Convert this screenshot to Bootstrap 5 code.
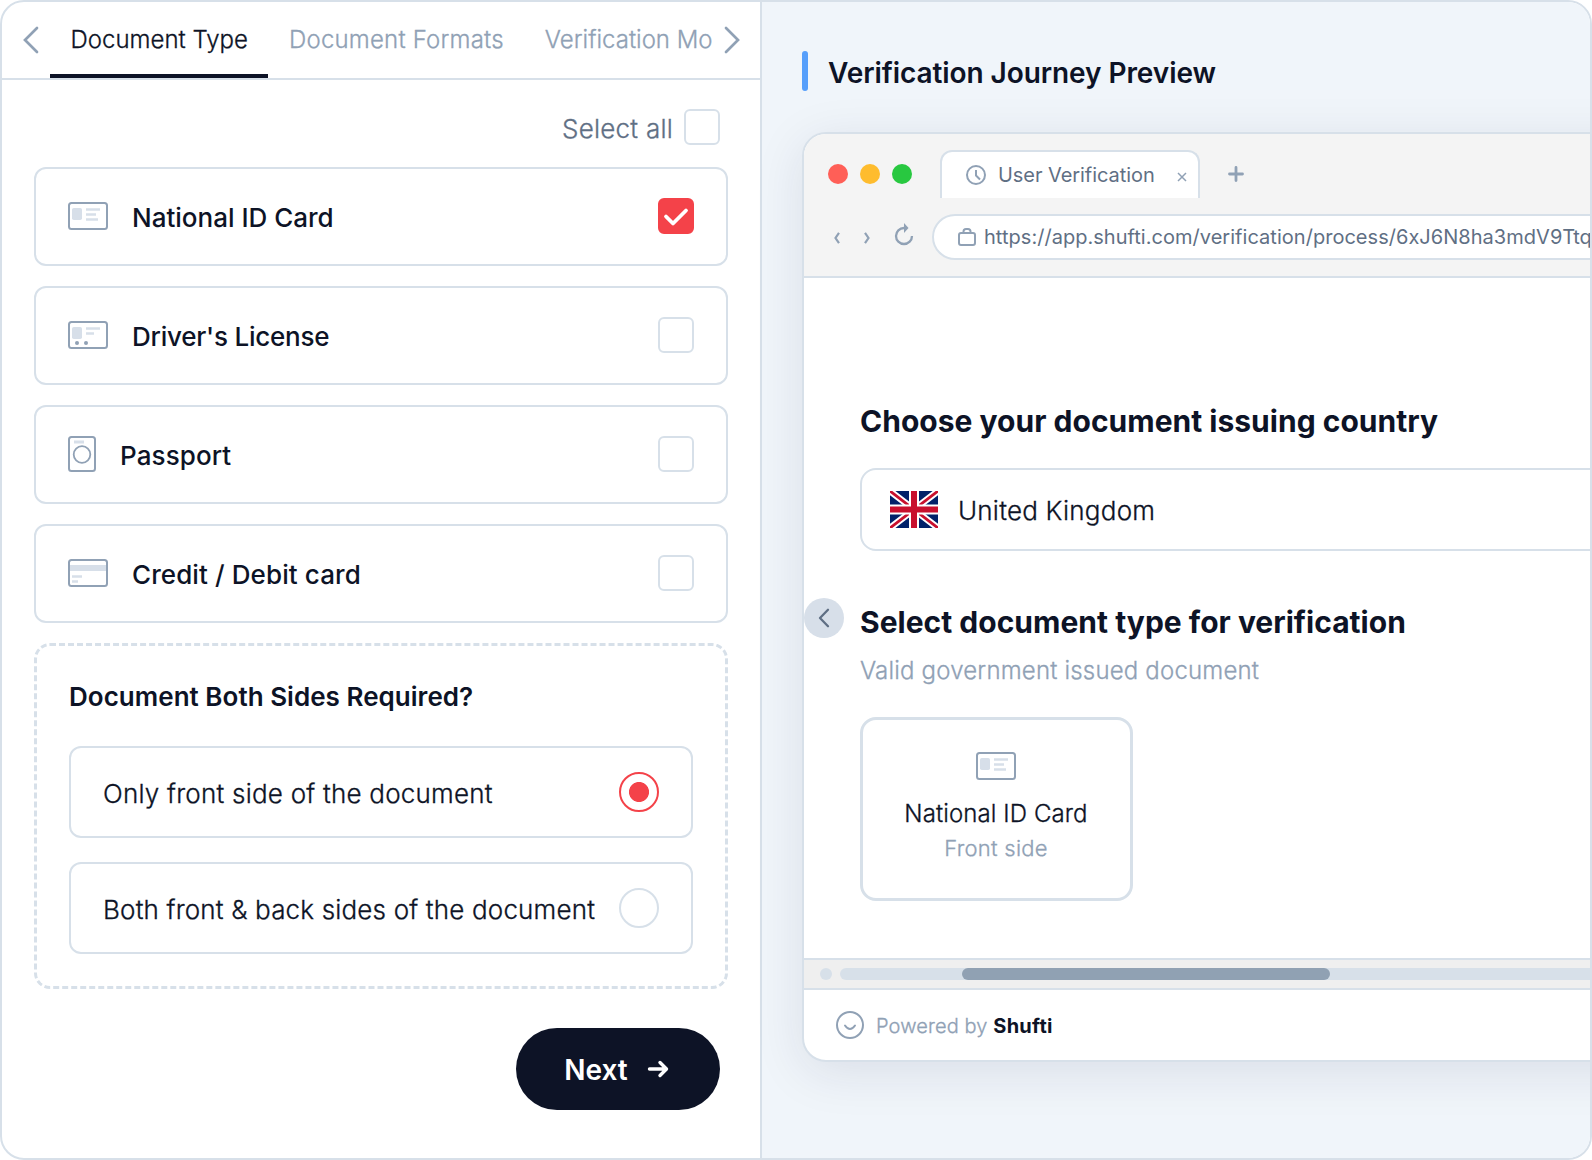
<!DOCTYPE html>
<html lang="en">
<head>
<meta charset="utf-8">
<meta name="viewport" content="width=device-width, initial-scale=1">
<title>Verification Journey</title>
<link href="https://cdn.jsdelivr.net/npm/bootstrap@5.3.0/dist/css/bootstrap.min.css" rel="stylesheet">
<style>
:root{--line:#d7e0e9;--ink:#0d1326;--slate:#5f6f84;--mute:#90a1b5;--red:#f44249}
body{font-family:Inter,"Liberation Sans",sans-serif;color:var(--ink);background:#fff;overflow:hidden}
svg{display:block;flex:none;overflow:visible}
.frame{width:1592px;height:1160px;border:2px solid var(--line);border-radius:24px}
.frame .left-pane{width:760px;border-right:2px solid var(--line)}
.right-pane{background:#f0f5fa;padding:49px 0 0 40px;min-width:0}
.light-text{font-weight:300;-webkit-text-stroke:.3px currentColor}
.tabs{height:78px;border-bottom:2px solid var(--line);padding:0 21px}
.tab-link{height:76px;font-size:24px;line-height:76px;color:var(--mute);white-space:nowrap}
.tab-link.current{width:218px;margin-left:11px;padding-left:20.5px;color:var(--ink);border-bottom:4px solid var(--ink)}
.tab-formats{margin-left:21px;letter-spacing:.2px}
.tab-modes{margin-left:41px}
.body-pane{padding:29px 32px 0}
.box{width:36px;height:36px;border:2px solid var(--line);border-radius:6px;flex:none}
.box.on{background:var(--red);border-color:var(--red)}
.doc .box,.doc svg.kind{margin-top:-1px}
.selall{font-size:26px;color:var(--slate);line-height:36px;gap:11px;margin:0 8px 22px 0;letter-spacing:.23px}
.selall .lbl{padding-top:2px;margin-bottom:-2px}
.doc{height:99px;border:2px solid var(--line);border-radius:12px;padding:0 32px;font-size:26px;font-weight:500}
.doc .lbl{padding-top:2px;margin-left:24px}
.ls-driver{letter-spacing:-.23px}
.ls-wide{letter-spacing:.1px}
.sides{height:346px;border:3px dashed var(--line);border-radius:16px;padding:31px 32px 0}
.sides h2{font-size:26px;font-weight:600;line-height:40px;margin:0 0 29px;letter-spacing:.03px}
.opt{height:92px;border:2px solid var(--line);border-radius:12px;padding:0 32px;font-size:26px;white-space:nowrap;letter-spacing:.22px}
.opt.both{letter-spacing:.17px}
.opt .lbl{padding-top:2px}
.radio{width:40px;height:40px;border:2px solid var(--line);border-radius:50%;flex:none}
.radio.on{border-color:var(--red);background:radial-gradient(circle,var(--red) 9.6px,transparent 10.4px)}
.next{width:204px;height:82px;background:var(--ink);color:#fff;font-size:28px;font-weight:600;margin:39px 8px 0 0;gap:20px;padding-right:4px}
.next .lbl{padding-top:2px}
.pv-title{height:40px;font-size:28px;font-weight:600;gap:20px;margin-bottom:41px;letter-spacing:-.075px}
.pv-title i{width:6px;height:40px;border-radius:3px;background:#569ffb}
.browser{width:900px;height:930px;border:2px solid var(--line);border-radius:24px;background:#fff;box-shadow:0 10px 50px rgba(30,30,70,.1)}
.chrome{height:144px;background:#f4f4f4;border-bottom:2px solid var(--line);border-radius:22px 22px 0 0;padding:16px 0 0 24px}
.dot{width:20px;height:20px;border-radius:50%;margin-right:12px}
.dot-close{background:#ff5f57}.dot-min{background:#febc2e}.dot-max{background:#28c840}
.btab{width:260px;height:48px;background:#fff;border:2px solid var(--line);border-bottom:0;border-radius:12px 12px 0 0;font-size:20px;color:var(--slate);margin:0 28px 0 16px;padding:0 11px 0 24px;white-space:nowrap;letter-spacing:-.06px}
.btab .lbl{margin-left:12px}
.addr{margin-top:16px;padding-left:6px}
.addr .arrow{margin:2px 24px 0 0}
.addr .reload{margin:-6px 0 0 1px}
.pill{width:760px;height:46px;border:2px solid var(--line);border-radius:23px;background:#fff;font-size:20px;color:var(--slate);padding-left:24px;margin-left:19px;gap:8px;white-space:nowrap;letter-spacing:.03px}
.content{height:680px;padding:123px 0 0 56px}
.content h1{font-size:30px;font-weight:700;line-height:40px;margin:0;white-space:nowrap;letter-spacing:.015px}
.country{height:83px;width:860px;border:2px solid var(--line);border-radius:16px;padding-left:28px;font-size:26px;gap:20px;margin-top:27px;margin-bottom:51px;letter-spacing:.22px}
.country .lbl{padding-top:2px}
.sub{font-size:24px;line-height:32px;color:var(--mute);margin:13px 0 30px;letter-spacing:.18px}
.pick{width:273px;height:184px;border:3px solid var(--line);border-radius:16px;padding:32px 1px 0 0}
.pick .nm{font-size:24px;line-height:34px;margin-top:17px;letter-spacing:.1px}
.pick .fs{font-size:22px;line-height:34px;color:var(--mute);letter-spacing:.27px}
.back{left:0;top:464px;width:40px;height:40px;border-radius:50%;background:#d7dfe9}
.sbar{height:32px;background:#efefef;border:solid var(--line);border-width:2px 0;padding-left:16px;gap:8px}
.sbar .nub{width:12px;height:12px;border-radius:50%;background:var(--line)}
.sbar .track{width:850px;height:12px;border-radius:6px;background:var(--line);padding-left:122px}
.sbar .thumb{width:368px;height:12px;border-radius:6px;background:#90a1b3}
.foot{height:70px;padding-left:32px;font-size:20px;gap:12px;color:var(--mute);letter-spacing:.12px}
.foot .lbl{padding-top:2px}
.foot b{color:var(--ink);font-weight:700;letter-spacing:.25px}
</style>
<script src="https://cdn.jsdelivr.net/npm/bootstrap@5.3.0/dist/js/bootstrap.bundle.min.js"></script>
</head>
<body>
<svg width="0" height="0" class="position-absolute">
<symbol id="idcard" viewBox="0 0 40 28"><rect x="1" y="1" width="38" height="26" rx="2.5" fill="none" stroke="#90a1b5" stroke-width="2"/><rect x="4" y="6" width="10" height="12" rx="1.8" fill="#d7dfe9"/><path d="M18 7.500h14M18 12.500h10M18 17.500h12" stroke="#d7dfe9" stroke-width="2.600"/></symbol>
</svg>
<div class="frame d-flex overflow-hidden">
  <section class="left-pane flex-shrink-0">
    <nav class="tabs d-flex">
      <svg width="16" height="76" viewBox="0 0 16 76" fill="none" stroke="#90a1b5" stroke-width="2.700" stroke-linecap="round"><path d="M14 26L2 38L14 50"/></svg>
      <div class="tab-link current light-text">Document Type</div>
      <div class="tab-link tab-formats light-text">Document Formats</div>
      <div class="tab-link tab-modes light-text">Verification Mo</div>
      <svg class="ms-auto" width="16" height="76" viewBox="0 0 16 76" fill="none" stroke="#90a1b5" stroke-width="2.700" stroke-linecap="round"><path d="M3 26L15 38L3 50"/></svg>
    </nav>
    <div class="body-pane">
      <div class="selall light-text d-flex justify-content-end align-items-center"><span class="lbl">Select all</span><span class="box"></span></div>
      <div class="d-grid" style="gap:20px">
        <div class="doc d-flex align-items-center"><svg class="kind" width="40" height="28"><use href="#idcard"/></svg><span class="lbl">National ID Card</span><span class="box on ms-auto"><svg width="32" height="32" viewBox="0 0 32 32" fill="none" stroke="#fff" stroke-width="3.800" stroke-linecap="round" stroke-linejoin="round"><path d="M6 16.500L13 23.500L26 10.500"/></svg></span></div>
        <div class="doc d-flex align-items-center"><svg class="kind" width="40" height="28"><rect x="1" y="1" width="38" height="26" rx="2.5" fill="none" stroke="#90a1b5" stroke-width="2"/><rect x="4" y="6" width="10" height="12" rx="1.800" fill="#d7dfe9"/><path d="M18 7.500h14M18 12.500h8" stroke="#d7dfe9" stroke-width="2.600"/><g fill="#90a1b5"><circle cx="9" cy="22" r="2"/><circle cx="18" cy="22" r="2"/></g></svg><span class="lbl ls-driver">Driver's License</span><span class="box ms-auto"></span></div>
        <div class="doc d-flex align-items-center"><svg class="kind" width="28" height="36"><rect x="1" y="1" width="26" height="34" rx="2.500" fill="none" stroke="#90a1b5" stroke-width="2"/><path d="M6 6h10" stroke="#d7dfe9" stroke-width="3"/><circle cx="14" cy="18.500" r="8.300" fill="none" stroke="#90a1b5" stroke-width="1.800"/></svg><span class="lbl ls-wide">Passport</span><span class="box ms-auto"></span></div>
        <div class="doc d-flex align-items-center"><svg class="kind" width="40" height="28"><path d="M2 9h36" stroke="#d7dfe9" stroke-width="6"/><path d="M4 17.500h10M4 22.500h6" stroke="#d7dfe9" stroke-width="2.600"/><rect x="1" y="1" width="38" height="26" rx="2.5" fill="none" stroke="#90a1b5" stroke-width="2"/></svg><span class="lbl ls-wide">Credit / Debit card</span><span class="box ms-auto"></span></div>
        <div class="sides">
          <h2>Document Both Sides Required?</h2>
          <div class="d-grid" style="gap:24px">
            <div class="opt d-flex align-items-center justify-content-between"><span class="lbl light-text">Only front side of the document</span><span class="radio on"></span></div>
            <div class="opt both d-flex align-items-center justify-content-between"><span class="lbl light-text">Both front &amp; back sides of the document</span><span class="radio"></span></div>
          </div>
        </div>
      </div>
      <div class="d-flex justify-content-end"><div class="next rounded-pill d-flex align-items-center justify-content-center"><span class="lbl">Next</span><svg width="20" height="18" viewBox="0 0 20 18" fill="none" stroke="#fff" stroke-width="3.400" stroke-linecap="round" stroke-linejoin="round"><path d="M1.500 9H18M12 2.500L18.500 9L12 15.500"/></svg></div></div>
    </div>
  </section>
  <section class="right-pane flex-grow-1">
    <div class="pv-title d-flex align-items-center"><i></i><span class="pt-1">Verification Journey Preview</span></div>
    <div class="browser position-relative">
      <div class="chrome">
        <div class="d-flex align-items-center">
          <span class="dot dot-close"></span><span class="dot dot-min"></span><span class="dot dot-max"></span>
          <div class="btab d-flex align-items-center"><svg width="20" height="20" viewBox="0 0 20 20" fill="none" stroke="#90a1b5" stroke-width="2"><circle cx="10" cy="10" r="9"/><path d="M10 5v5.500l4 4" stroke-linejoin="round"/></svg><span class="lbl">User Verification</span>
          <svg class="ms-auto mt-1" width="10" height="10" viewBox="0 0 10 10" stroke="#90a1b5" stroke-width="1.500"><path d="M1 1L9 9M9 1L1 9"/></svg></div>
          <svg width="16" height="16" viewBox="0 0 16 16" stroke="#90a1b5" stroke-width="2.800" stroke-linecap="round"><path d="M8 1.500v13M1.500 8h13"/></svg>
        </div>
        <div class="addr d-flex align-items-center">
          <svg class="arrow" width="6" height="12" viewBox="0 0 6 12" fill="none" stroke="#90a1b5" stroke-width="2.200"><path d="M5 .8L1.500 6L5 11.200"/></svg>
          <svg class="arrow" width="6" height="12" viewBox="0 0 6 12" fill="none" stroke="#90a1b5" stroke-width="2.200"><path d="M1 .8L4.500 6L1 11.200"/></svg>
          <svg class="reload" width="18" height="22" viewBox="0 0 18 22" fill="none" stroke="#90a1b5" stroke-width="2.300"><path d="M9 5A8 8 0 1 0 17 13"/><path d="M9 0L13.500 5L9 10Z" fill="#90a1b5" stroke="none"/></svg>
          <div class="pill d-flex align-items-center"><svg width="18" height="18" viewBox="0 0 18 18" fill="none" stroke="#90a1b5" stroke-width="2"><rect x="1" y="5" width="16" height="12" rx="2"/><path d="M5.500 5V3.500Q5.500 1 8 1H10Q12.500 1 12.500 3.500V5"/></svg><span>https://app.shufti.com/verification/process/6xJ6N8ha3mdV9Ttq</span></div>
        </div>
      </div>
      <div class="content">
        <h1>Choose your document issuing country</h1>
        <div class="country d-flex align-items-center"><svg width="48" height="37" viewBox="0 0 48 37"><defs><clipPath id="fl"><path d="M0 0h48v37H0z"/></clipPath></defs><g clip-path="url(#fl)"><path fill="#012169" d="M0 0h48v37H0z"/><path d="M0 0L48 37M48 0L0 37" stroke="#fff" stroke-width="6.600"/><path d="M0 0L48 37M48 0L0 37" stroke="#c8102e" stroke-width="2.800"/><path d="M24 0v37M0 18.500h48" stroke="#fff" stroke-width="10"/><path d="M24 0v37M0 18.500h48" stroke="#c8102e" stroke-width="6"/></g></svg><span class="lbl light-text">United Kingdom</span></div>
        <h1>Select document type for verification</h1>
        <p class="sub light-text">Valid government issued document</p>
        <div class="pick d-flex flex-column align-items-center"><svg width="40" height="28"><use href="#idcard"/></svg><div class="nm light-text">National ID Card</div><div class="fs light-text">Front side</div></div>
      </div>
      <div class="sbar d-flex align-items-center"><span class="nub"></span><div class="track"><div class="thumb"></div></div></div>
      <div class="foot d-flex align-items-center"><svg width="28" height="28" viewBox="0 0 28 28" fill="none" stroke="#90a1b5" stroke-width="2" stroke-linecap="round"><circle cx="14" cy="14" r="13"/><path d="M9 14.500Q14 21.500 19 14.500"/></svg><span class="lbl"><span class="light-text">Powered by</span> <b>Shufti</b></span></div>
      <div class="back position-absolute d-flex align-items-center justify-content-center"><svg width="12" height="20" viewBox="0 0 12 20" fill="none" stroke="#5f6f84" stroke-width="2.300" stroke-linecap="round" stroke-linejoin="round"><path d="M10 1.800L2 10L10 18.200"/></svg></div>
    </div>
  </section>
</div>
</body>
</html>
